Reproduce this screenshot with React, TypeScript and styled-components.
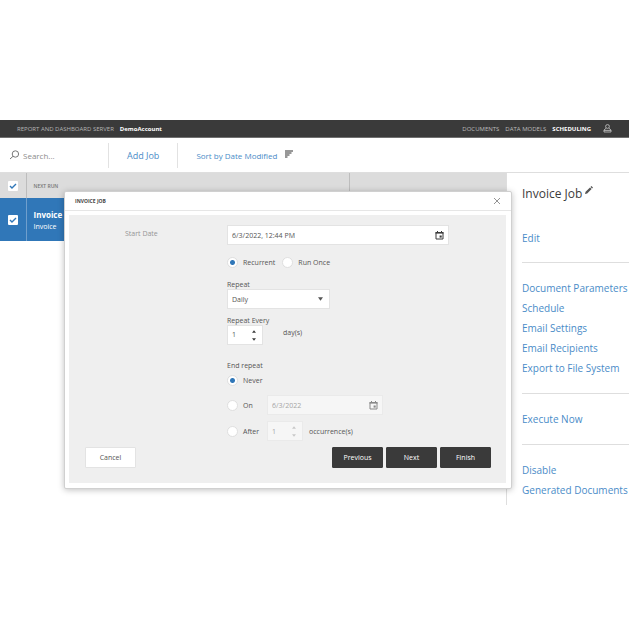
import React, { useState } from "react";
import styled, { createGlobalStyle, css } from "styled-components";

const GlobalStyle = createGlobalStyle`
  *, *::before, *::after { box-sizing: border-box; }
  body { margin: 0; background: #fff; }
  button, input, select { font: inherit; color: inherit; margin: 0; }
  #root { font-family: "Open Sans", "Noto Sans", sans-serif; font-size: 7px; color: #555; }
`;

const Page = styled.div`
  padding: 120px 0;
`;

const Shell = styled.div`
  position: relative;
`;

const TopBar = styled.header`
  display: flex;
  align-items: center;
  height: 18px;
  padding: 0 17px;
  background: #3a3a3a;
  border-bottom: 1px solid #707070;
  font-size: 6px;
  color: #b5b5b5;
`;

const Account = styled.strong`
  margin-left: 6px;
  color: #fff;
`;

const Nav = styled.nav`
  display: flex;
  align-items: center;
  gap: 6px;
  margin-left: auto;
`;

const NavLink = styled.a<{ $active?: boolean }>`
  color: ${(p) => (p.$active ? "#fff" : "#bcbcbc")};
  font-weight: ${(p) => (p.$active ? 700 : 400)};
  text-decoration: none;
`;

const AccountButton = styled.button`
  display: flex;
  margin-left: 6px;
  padding: 0;
  border: 0;
  background: none;
  color: #bcbcbc;
`;

const Toolbar = styled.div`
  display: flex;
  align-items: center;
  height: 35px;
  border-bottom: 1px solid #dedede;
  font-size: 8px;
`;

const SearchBox = styled.label`
  display: flex;
  align-items: center;
  gap: 3px;
  width: 109px;
  height: 25px;
  padding-left: 9px;
  border-right: 1px solid #e2e2e2;
  color: #777;
`;

const SearchInput = styled.input`
  width: 70px;
  padding: 0;
  border: 0;
  outline: 0;
  background: none;
  &::placeholder { color: #8c8c8c; opacity: 1; }
`;

const ToolButton = styled.button<{ $primary?: boolean }>`
  display: flex;
  align-items: center;
  gap: 8px;
  height: 25px;
  padding: 0 18px;
  border: 0;
  border-right: ${(p) => (p.$primary ? "1px solid #e2e2e2" : "0")};
  background: none;
  font-size: ${(p) => (p.$primary ? 9 : 8)}px;
  color: #4a8cc8;
  svg { margin-bottom: 3px; color: #777; }
`;

const Main = styled.main`
  display: grid;
  grid-template-columns: minmax(0, 1fr) 123px;
`;

const JobTable = styled.table`
  width: 100%;
  border-collapse: collapse;
  table-layout: fixed;
  align-self: start;
`;

const Th = styled.th<{ $width?: number }>`
  width: ${(p) => (p.$width ? `${p.$width}px` : "auto")};
  height: 25px;
  padding: 0 7px;
  background: #dcdcdc;
  border-right: 1px solid #bdbdbd;
  text-align: left;
  font-size: 5px;
  font-weight: 600;
  color: #757575;
  &:first-child { padding: 0 8px; }
  &:last-child { border-right: 0; }
`;

const Td = styled.td`
  height: 43px;
  padding: 2px 7px 0;
  background: #3077b8;
  border-right: 1px solid #6f9fcd;
  color: #fff;
  &:first-child { padding: 0 8px; }
  &:nth-child(n + 2) { border-right: 0; }
`;

const JobName = styled.strong`
  display: block;
  font-size: 8px;
  line-height: 12px;
`;

const JobDocument = styled.span`
  display: block;
  font-size: 7px;
  line-height: 12px;
`;

const CheckBox = styled.span`
  display: grid;
  width: 10px;
  height: 10px;
  background: #fff;
  border-radius: 1px;
  > * { grid-area: 1 / 1; }
  input { appearance: none; width: 10px; height: 10px; }
  svg { opacity: 0; pointer-events: none; color: #3077b8; }
  input:checked + svg { opacity: 1; }
`;

const SidePanel = styled.aside`
  padding: 9px 0 5px 15px;
  border-left: 1px solid #dedede;
`;

const JobTitle = styled.h1`
  display: flex;
  gap: 3px;
  margin: 0;
  font-size: 12px;
  font-weight: 400;
  line-height: 23px;
  color: #3c3c3c;
  svg { margin-top: 4px; }
`;

const LinkGroup = styled.nav`
  display: flex;
  flex-direction: column;
  padding: 15px 0;
  border-bottom: 1px solid #dedede;
  &:first-of-type { padding: 23px 0 14px; }
  &:last-of-type { padding-bottom: 0; border-bottom: 0; }
`;

const PanelLink = styled.a`
  font-size: 10px;
  line-height: 20px;
  white-space: nowrap;
  color: #4a8cc8;
  text-decoration: none;
`;

const Dialog = styled.section`
  position: absolute;
  top: 71px;
  left: 64px;
  right: 117px;
  padding: 0 5px 5px 4px;
  background: #fff;
  border: 1px solid #d0d0d0;
  border-radius: 2px;
  box-shadow: 0 1px 6px rgba(0, 0, 0, 0.25);
`;

const DialogHeader = styled.header`
  display: flex;
  align-items: center;
  justify-content: space-between;
  height: 19px;
  margin: 0 -5px 4px -4px;
  padding: 0 10px;
  border-bottom: 1px solid #e6e6e6;
`;

const DialogTitle = styled.h2`
  margin: 0;
  font-size: 5px;
  font-weight: 700;
  color: #444;
`;

const CloseButton = styled.button`
  display: flex;
  padding: 0;
  border: 0;
  background: none;
  color: #888;
`;

const DialogBody = styled.form`
  padding: 10px 15px 15px 16px;
  background: #efefef;
`;

const Schedule = styled.div`
  display: grid;
  grid-template-columns: 102px minmax(0, 222px);
  margin-left: 40px;
`;

const StartLabel = styled.label`
  line-height: 18px;
  color: #959595;
`;

const Fields = styled.div`
  display: flex;
  flex-direction: column;
`;

const boxed = css`
  height: 20px;
  background: #fff;
  border: 1px solid #e3e3e3;
`;

const InputBox = styled.div<{ $width?: number; $disabled?: boolean }>`
  ${boxed}
  display: flex;
  align-items: center;
  width: ${(p) => (p.$width ? `${p.$width}px` : "100%")};
  padding: 0 4px;
  ${(p) => p.$disabled && css`
    background: #f6f6f6;
    border-color: #eaeaea;
    color: #a5a5a5;
  `}
`;

const TextInput = styled.input`
  flex: 1;
  min-width: 0;
  padding: 0;
  border: 0;
  outline: 0;
  background: none;
  appearance: textfield;
  &::-webkit-inner-spin-button { appearance: none; }
`;

const IconButton = styled.button`
  display: flex;
  padding: 0;
  border: 0;
  background: none;
  color: #3a3a3a;
  &:disabled { color: #888; }
`;

const Steps = styled.span`
  display: flex;
  flex-direction: column;
  gap: 5px;
  padding-right: 2px;
`;

const StepButton = styled(IconButton)`
  &:disabled { color: #c8c8c8; }
`;

const RadioRow = styled.div`
  display: flex;
  align-items: center;
  gap: 7px;
  height: 16px;
  margin-top: 9px;
`;

const EndRow = styled.div<{ $gap: number; $height: number }>`
  display: flex;
  align-items: center;
  height: ${(p) => p.$height}px;
  margin-top: ${(p) => p.$gap}px;
`;

const Choice = styled.label<{ $width?: number }>`
  display: flex;
  align-items: center;
  gap: 5px;
  width: ${(p) => (p.$width ? `${p.$width}px` : "auto")};
`;

const Radio = styled.input`
  appearance: none;
  width: 11px;
  height: 11px;
  border: 1px solid #dfdfdf;
  border-radius: 50%;
  background: #fff;
  &:checked { background: radial-gradient(circle, #3077b8 0 2px, #fff 3px); }
`;

const FieldLabel = styled.label<{ $gap: number }>`
  margin-top: ${(p) => p.$gap}px;
  line-height: 9px;
`;

const GroupTitle = styled.div`
  margin-top: 16px;
  line-height: 9px;
`;

const SelectBox = styled.div`
  ${boxed}
  display: grid;
  align-items: center;
  width: 103px;
  > * { grid-area: 1 / 1; }
  svg { justify-self: end; margin-right: 6px; pointer-events: none; }
`;

const Select = styled.select`
  appearance: none;
  width: 100%;
  height: 18px;
  padding: 0 4px;
  border: 0;
  background: none;
`;

const UnitRow = styled.div`
  display: flex;
  gap: 20px;
  line-height: 16px;
`;

const Unit = styled.span`
  margin-left: 6px;
`;

const Footer = styled.footer`
  display: flex;
  gap: 3px;
  margin-top: 6px;
`;

const Button = styled.button<{ $secondary?: boolean }>`
  width: 51px;
  height: 21px;
  padding: 0;
  border: 1px solid ${(p) => (p.$secondary ? "#e3e3e3" : "#3a3a3a")};
  border-radius: 1px;
  background: ${(p) => (p.$secondary ? "#fff" : "#3a3a3a")};
  color: ${(p) => (p.$secondary ? "#555" : "#fff")};
  margin-right: ${(p) => (p.$secondary ? "auto" : "0")};
`;

const CheckIcon = () => (
  <svg width="10" height="10" viewBox="0 0 10 10" fill="none" stroke="currentColor" strokeWidth="1.4">
    <path d="M2 5l2 2 4-4" />
  </svg>
);

const CalendarIcon = () => (
  <svg width="9" height="9" viewBox="0 0 9 9" fill="none" stroke="currentColor">
    <path d="M1 1.5h7v6.5H1z" />
    <path d="M.5 1.8h8" strokeWidth="1.6" />
    <path d="M2.5 0v1.5M6.5 0v1.5" />
    <path d="M4.6 4.5h2.1v2.1H4.6z" fill="currentColor" stroke="none" />
  </svg>
);

const Arrow = ({ up, size = 4 }: { up?: boolean; size?: number }) => (
  <svg width={size} height={size === 4 ? 3 : 4} viewBox="0 0 6 4" fill="currentColor">
    <path d={up ? "M0 4L3 0l3 4z" : "M0 0h6L3 4z"} />
  </svg>
);

function Check({ label }: { label: string }) {
  return (
    <CheckBox>
      <input type="checkbox" defaultChecked aria-label={label} />
      <CheckIcon />
    </CheckBox>
  );
}

function NumberField({ label, id, disabled }: { label: string; id: string; disabled?: boolean }) {
  const [value, setValue] = useState(1);
  return (
    <InputBox $width={36} $disabled={disabled}>
      <TextInput
        id={id}
        type="number"
        min={1}
        aria-label={label}
        value={value}
        disabled={disabled}
        onChange={(e) => setValue(Number(e.target.value))}
      />
      <Steps>
        <StepButton type="button" aria-label="Increase" disabled={disabled} onClick={() => setValue(value + 1)}>
          <Arrow up />
        </StepButton>
        <StepButton type="button" aria-label="Decrease" disabled={disabled} onClick={() => setValue(Math.max(1, value - 1))}>
          <Arrow />
        </StepButton>
      </Steps>
    </InputBox>
  );
}

const groups = [
  ["Edit"],
  ["Document Parameters", "Schedule", "Email Settings", "Email Recipients", "Export to File System"],
  ["Execute Now"],
  ["Disable", "Generated Documents"],
];

export default function App() {
  const [end, setEnd] = useState("never");
  return (
    <Page>
      <GlobalStyle />
      <Shell>
        <TopBar>
          <span>REPORT AND DASHBOARD SERVER</span>
          <Account>DemoAccount</Account>
          <Nav>
            <NavLink href="#documents">DOCUMENTS</NavLink>
            <NavLink href="#models">DATA MODELS</NavLink>
            <NavLink href="#scheduling" $active>SCHEDULING</NavLink>
            <AccountButton aria-label="Account">
              <svg width="9" height="9" viewBox="0 0 9 9" fill="none" stroke="currentColor" strokeWidth="0.9">
                <circle cx="4.5" cy="2.5" r="1.9" />
                <path d="M3 4.3L1 6v2h7V6L6 4.3M1 6.4h7" />
              </svg>
            </AccountButton>
          </Nav>
        </TopBar>
        <Toolbar>
          <SearchBox>
            <svg width="11" height="10" viewBox="0 0 11 10" fill="none" stroke="currentColor">
              <circle cx="6.4" cy="4" r="3.2" />
              <path d="M4 6.3L1 9" />
            </svg>
            <SearchInput type="search" aria-label="Search" placeholder="Search..." />
          </SearchBox>
          <ToolButton $primary>Add Job</ToolButton>
          <ToolButton>
            Sort by Date Modified
            <svg width="8" height="8" viewBox="0 0 8 8" stroke="currentColor" strokeWidth="1.3">
              <path d="M0 1h8M0 3h6.5M0 5h4.5M0 7h2.5" />
            </svg>
          </ToolButton>
        </Toolbar>
        <Main>
          <JobTable>
            <thead>
              <tr>
                <Th $width={26}><Check label="Select all" /></Th>
                <Th $width={323}>NEXT RUN</Th>
                <Th />
              </tr>
            </thead>
            <tbody>
              <tr>
                <Td><Check label="Select Invoice" /></Td>
                <Td>
                  <JobName>Invoice</JobName>
                  <JobDocument>Invoice</JobDocument>
                </Td>
                <Td />
              </tr>
            </tbody>
          </JobTable>
          <SidePanel>
            <JobTitle>
              Invoice Job
              <svg width="8" height="8" viewBox="0 0 8 8" fill="#555">
                <path d="M0 8l.6-2.2L5 1.4l1.6 1.5-4.4 4.5zM5.5 1L6.4.1 8 1.6l-.9.9z" />
              </svg>
            </JobTitle>
            {groups.map((links) => (
              <LinkGroup key={links[0]}>
                {links.map((text) => (
                  <PanelLink key={text} href="#job">{text}</PanelLink>
                ))}
              </LinkGroup>
            ))}
          </SidePanel>
        </Main>
        <Dialog role="dialog" aria-labelledby="dialog-title">
          <DialogHeader>
            <DialogTitle id="dialog-title">INVOICE JOB</DialogTitle>
            <CloseButton aria-label="Close">
              <svg width="8" height="8" viewBox="0 0 8 8" stroke="currentColor" strokeWidth="0.9">
                <path d="M1 1l6 6M7 1L1 7" />
              </svg>
            </CloseButton>
          </DialogHeader>
          <DialogBody onSubmit={(e) => e.preventDefault()}>
            <Schedule>
              <StartLabel htmlFor="start">Start Date</StartLabel>
              <Fields>
                <InputBox>
                  <TextInput id="start" defaultValue="6/3/2022, 12:44 PM" />
                  <IconButton type="button" aria-label="Pick start date"><CalendarIcon /></IconButton>
                </InputBox>
                <RadioRow>
                  <Choice><Radio type="radio" name="mode" defaultChecked />Recurrent</Choice>
                  <Choice><Radio type="radio" name="mode" />Run Once</Choice>
                </RadioRow>
                <FieldLabel $gap={10} htmlFor="repeat">Repeat</FieldLabel>
                <SelectBox>
                  <Select id="repeat" defaultValue="Daily">
                    <option>Daily</option>
                    <option>Weekly</option>
                    <option>Monthly</option>
                  </Select>
                  <Arrow size={5} />
                </SelectBox>
                <FieldLabel $gap={7} htmlFor="every">Repeat Every</FieldLabel>
                <UnitRow>
                  <NumberField id="every" label="Repeat every" />
                  <span>day(s)</span>
                </UnitRow>
                <GroupTitle>End repeat</GroupTitle>
                <EndRow $gap={2} $height={16}>
                  <Choice><Radio type="radio" name="end" checked={end === "never"} onChange={() => setEnd("never")} />Never</Choice>
                </EndRow>
                <EndRow $gap={7} $height={20}>
                  <Choice $width={40}><Radio type="radio" name="end" checked={end === "on"} onChange={() => setEnd("on")} />On</Choice>
                  <InputBox $width={116} $disabled={end !== "on"}>
                    <TextInput aria-label="End date" defaultValue="6/3/2022" disabled={end !== "on"} />
                    <IconButton type="button" aria-label="Pick end date" disabled={end !== "on"}><CalendarIcon /></IconButton>
                  </InputBox>
                </EndRow>
                <EndRow $gap={6} $height={20}>
                  <Choice $width={40}><Radio type="radio" name="end" checked={end === "after"} onChange={() => setEnd("after")} />After</Choice>
                  <NumberField id="count" label="Occurrences" disabled={end !== "after"} />
                  <Unit>occurrence(s)</Unit>
                </EndRow>
              </Fields>
            </Schedule>
            <Footer>
              <Button type="button" $secondary>Cancel</Button>
              <Button type="button">Previous</Button>
              <Button type="button">Next</Button>
              <Button type="submit">Finish</Button>
            </Footer>
          </DialogBody>
        </Dialog>
      </Shell>
    </Page>
  );
}
